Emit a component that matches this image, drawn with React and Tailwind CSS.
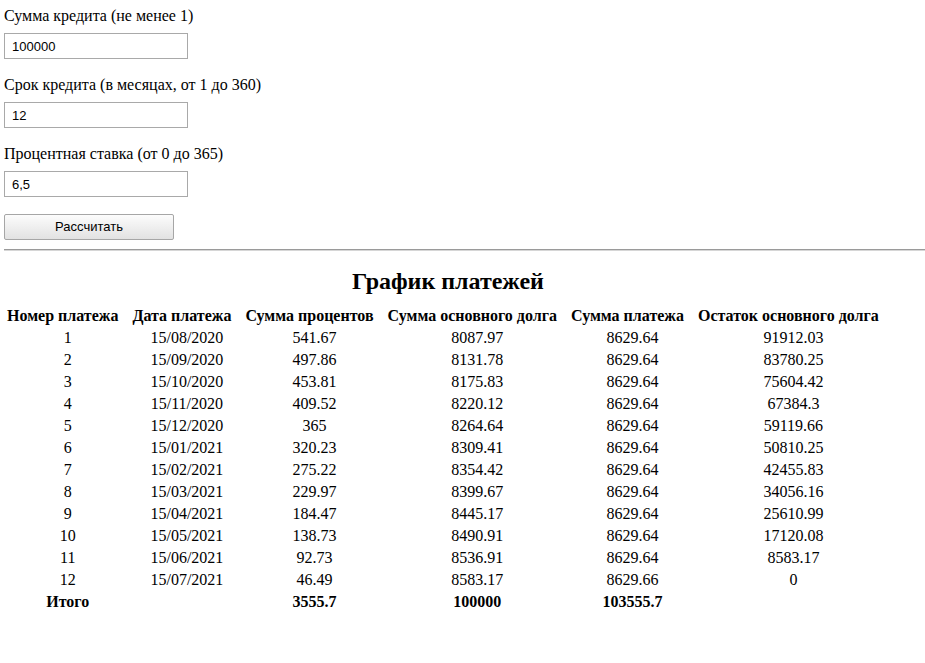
import React from "react";

const rows = [
  ["1", "15/08/2020", "541.67", "8087.97", "8629.64", "91912.03"],
  ["2", "15/09/2020", "497.86", "8131.78", "8629.64", "83780.25"],
  ["3", "15/10/2020", "453.81", "8175.83", "8629.64", "75604.42"],
  ["4", "15/11/2020", "409.52", "8220.12", "8629.64", "67384.3"],
  ["5", "15/12/2020", "365", "8264.64", "8629.64", "59119.66"],
  ["6", "15/01/2021", "320.23", "8309.41", "8629.64", "50810.25"],
  ["7", "15/02/2021", "275.22", "8354.42", "8629.64", "42455.83"],
  ["8", "15/03/2021", "229.97", "8399.67", "8629.64", "34056.16"],
  ["9", "15/04/2021", "184.47", "8445.17", "8629.64", "25610.99"],
  ["10", "15/05/2021", "138.73", "8490.91", "8629.64", "17120.08"],
  ["11", "15/06/2021", "92.73", "8536.91", "8629.64", "8583.17"],
  ["12", "15/07/2021", "46.49", "8583.17", "8629.66", "0"],
];

const headers = [
  "Номер платежа",
  "Дата платежа",
  "Сумма процентов",
  "Сумма основного долга",
  "Сумма платежа",
  "Остаток основного долга",
];

function Field({ label, value, first }) {
  return (
    <div className={first ? "flex flex-col" : "flex flex-col mt-[17px]"}>
      <label className="leading-[18px] text-[16px] text-black">{label}</label>
      <input
        defaultValue={value}
        className="mt-[8px] h-[26px] w-[184px] border border-[#a9a9a9] bg-white px-[7px] text-[13px] text-black outline-none font-['Liberation_Sans',Arial,sans-serif]"
      />
    </div>
  );
}

export default function App() {
  return (
    <div className="min-h-[663px] bg-white pl-[4px] pt-[7px] font-['Liberation_Serif','Times_New_Roman',serif] text-black">
      <Field label="Сумма кредита (не менее 1)" value="100000" first />
      <Field label="Срок кредита (в месяцах, от 1 до 360)" value="12" />
      <Field label="Процентная ставка (от 0 до 365)" value="6,5" />
      <button className="mt-[17px] h-[26px] w-[170px] rounded-[2px] border border-[#a6a6a6] bg-gradient-to-b from-[#fcfcfc] to-[#e2e2e2] text-[13px] text-black font-['Liberation_Sans',Arial,sans-serif]">
        Рассчитать
      </button>
      <div className="mt-[9px] border-t border-[#9a9a9a] border-b border-b-[#d6d6d6]" />
      <table className="mt-[16px] border-separate border-spacing-[2px] text-[16px]">
        <caption className="pb-[9px] text-[24px] font-bold leading-[28px]">График платежей</caption>
        <thead>
          <tr>
            {headers.map((h) => (
              <th key={h} className="pl-[1px] pr-[11px] py-[1px] font-bold leading-[18px] whitespace-nowrap text-center">
                {h}
              </th>
            ))}
          </tr>
        </thead>
        <tbody>
          {rows.map((r) => (
            <tr key={r[0]}>
              {r.map((c, i) => (
                <td key={i} className="p-[1px] text-center leading-[18px]">
                  {c}
                </td>
              ))}
            </tr>
          ))}
          <tr>
            <td className="p-[1px] text-center leading-[18px] font-bold">Итого</td>
            <td className="p-[1px] text-center leading-[18px]"></td>
            <td className="p-[1px] text-center leading-[18px] font-bold">3555.7</td>
            <td className="p-[1px] text-center leading-[18px] font-bold">100000</td>
            <td className="p-[1px] text-center leading-[18px] font-bold">103555.7</td>
            <td className="p-[1px] text-center leading-[18px]"></td>
          </tr>
        </tbody>
      </table>
    </div>
  );
}
